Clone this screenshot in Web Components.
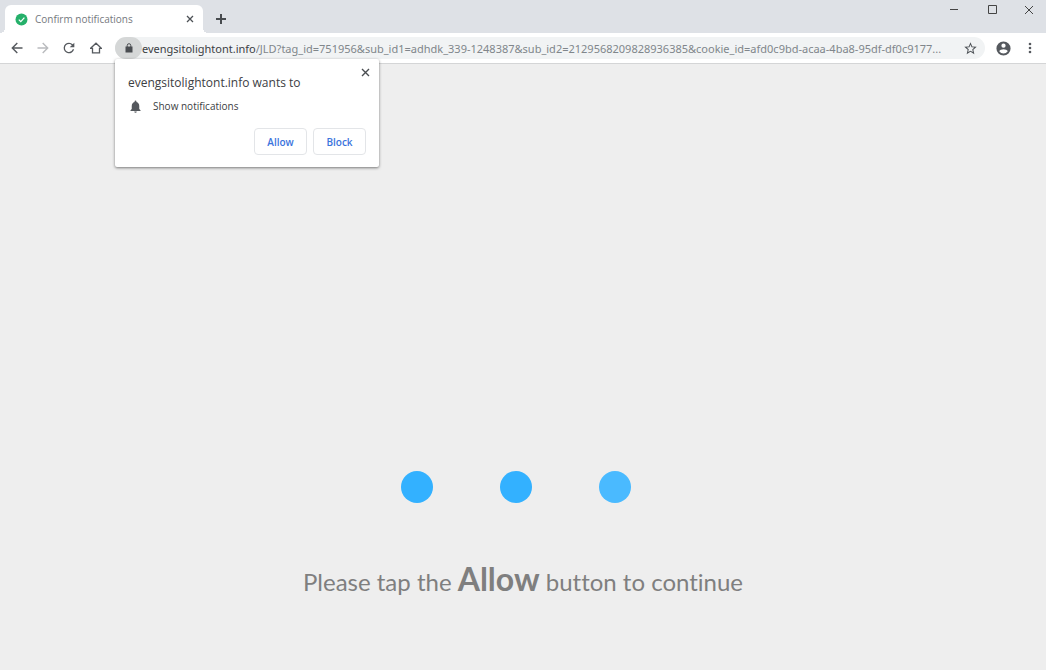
<!DOCTYPE html>
<html lang="en">
<head>
<meta charset="utf-8">
<title>Confirm notifications</title>
<style>
html, body { height: 100%; margin: 0; }
body { font-family: "Open Sans", "Noto Sans", sans-serif; background: #eee; }
</style>
</head>
<body>
<browser-window>
  <tab-strip slot="tabs"><browser-tab>Confirm notifications</browser-tab></tab-strip>
  <tool-bar slot="toolbar">
    <address-bar host="evengsitolightont.info" path="/JLD?tag_id=751956&amp;sub_id1=adhdk_339-1248387&amp;sub_id2=2129568209828936385&amp;cookie_id=afd0c9bd-acaa-4ba8-95df-df0c9177...">
      <permission-prompt>
        <span slot="title">evengsitolightont.info wants to</span>
        <span slot="permission">Show notifications</span>
      </permission-prompt>
    </address-bar>
  </tool-bar>
  <loading-page>Please tap the <strong>Allow</strong> button to continue</loading-page>
</browser-window>

<script>
const define = (name, html, setup) => customElements.define(name, class extends HTMLElement {
  constructor() {
    super();
    const t = document.createElement('template');
    t.innerHTML = `<style>
      *, :host { box-sizing: border-box; }
      button { font: inherit; color: inherit; background: none; border: 0; padding: 0; margin: 0; }
      svg { display: block; }
    </style>` + html;
    this.attachShadow({ mode: 'open' }).append(t.content.cloneNode(true));
  }
  connectedCallback() { if (setup) setup(this, this.shadowRoot); }
});

define('browser-window', `
  <style>
    :host { display: flex; flex-direction: column; min-height: 100%; }
    ::slotted(loading-page) { flex: 1; }
  </style>
  <slot name="tabs"></slot><slot name="toolbar"></slot><slot></slot>`);

define('tab-strip', `
  <style>
    :host { display: flex; height: 33px; padding: 5px 0 0 5px; background: #dee1e6; color: #484b4f; }
    .new { width: 36px; height: 28px; display: grid; place-items: center; }
    .controls { margin: -5px 0 0 auto; display: flex; height: 20px; }
    .controls button { width: 38px; display: grid; place-items: center; }
    .controls button:last-child { width: 34px; }
  </style>
  <slot></slot>
  <button class="new" aria-label="New tab"><svg width="12" height="12" viewBox="0 0 12 12" stroke="currentColor" stroke-width="2"><path d="M6 1v10M1 6h10"/></svg></button>
  <div class="controls">
    <button aria-label="Minimize"><svg width="10" height="10" stroke="#444" fill="none"><path d="M0 4.500h8"/></svg></button>
    <button aria-label="Maximize"><svg width="10" height="10" stroke="#444" fill="none"><path d="M.5.5h8v8h-8z"/></svg></button>
    <button aria-label="Close window"><svg width="10" height="10" stroke="#444" fill="none"><path d="M1 1l8 8M9 1L1 9"/></svg></button>
  </div>`);

define('browser-tab', `
  <style>
    :host { position: relative; display: flex; align-items: center; width: 198px; height: 28px; padding: 0 7px 0 10px; gap: 7px; background: #fff; border-radius: 6px 6px 0 0; font-size: 10px; color: #75797e; }
    :host::before, :host::after { content: ""; position: absolute; bottom: 0; width: 5px; height: 5px; }
    :host::before { right: 100%; background: radial-gradient(circle at 0 0, transparent 5px, #fff 5px); }
    :host::after { left: 100%; background: radial-gradient(circle at 100% 0, transparent 5px, #fff 5px); }
    span { flex: 1; white-space: nowrap; }
    button { display: grid; place-items: center; width: 12px; height: 12px; color: #4d5156; }
  </style>
  <svg width="13" height="13" viewBox="0 0 13 13"><circle cx="6.500" cy="6.500" r="6" fill="#25b06a"/><path d="M3.800 6.700l2 2 3.600-4" fill="none" stroke="#fff" stroke-width="1.200"/></svg>
  <span><slot></slot></span>
  <button aria-label="Close tab"><svg width="8" height="8" stroke="currentColor" stroke-width="1.300"><path d="M1 1l6 6M7 1L1 7"/></svg></button>`);

define('tool-bar', `
  <style>
    :host { display: flex; align-items: center; height: 31px; padding: 0 5px 0 6px; background: #fff; border-bottom: 1px solid #d4d5d6; color: #55595e; }
    button { width: 22px; height: 22px; margin-right: 4px; display: grid; place-items: center; flex: none; }
    button:disabled { color: #b9bbbe; }
    .home { margin: 0 8px 0 1px; }
    slot { display: flex; flex: 1; min-width: 0; }
    ::slotted(*) { flex: 1; }
    .user { margin: 0 5px 0 7px; }
    .menu { margin: 0; }
  </style>
  <button aria-label="Back"><svg width="12" height="12" viewBox="0 0 12 12" fill="none" stroke="currentColor" stroke-width="1.400"><path d="M11.500 6H1.500M6.300 1L1.300 6l5 5"/></svg></button>
  <button aria-label="Forward" disabled><svg width="12" height="12" viewBox="0 0 12 12" fill="none" stroke="currentColor" stroke-width="1.400"><path d="M.5 6h10M5.700 1l5 5-5 5"/></svg></button>
  <button aria-label="Reload"><svg width="16" height="16" viewBox="0 0 24 24" fill="currentColor"><path d="M17.650 6.350A7.960 7.960 0 0 0 12 4a8 8 0 1 0 7.730 10h-2.080A6 6 0 1 1 12 6c1.660 0 3.140.69 4.220 1.780L13 11h7V4z"/></svg></button>
  <button class="home" aria-label="Home"><svg width="12" height="12" viewBox="0 0 12 12" fill="none" stroke="currentColor" stroke-width="1.300"><path d="M.6 6.300L6 1.200l5.400 5.100H9.500v4.600h-7V6.300z"/></svg></button>
  <slot></slot>
  <button class="user" aria-label="Profile"><svg width="17" height="17" viewBox="0 0 24 24" fill="currentColor"><path d="M12 2a10 10 0 1 0 0 20 10 10 0 0 0 0-20zm0 3a3 3 0 1 1 0 6 3 3 0 0 1 0-6zm0 14.200a7.200 7.200 0 0 1-6-3.220c.03-1.990 4-3.080 6-3.080s5.970 1.090 6 3.080a7.200 7.200 0 0 1-6 3.220z"/></svg></button>
  <button class="menu" aria-label="Menu"><svg width="4" height="12" viewBox="0 0 4 12" fill="currentColor"><circle cx="2" cy="2" r="1.300"/><circle cx="2" cy="6" r="1.300"/><circle cx="2" cy="10" r="1.300"/></svg></button>`);

define('address-bar', `
  <style>
    :host { position: relative; display: flex; align-items: center; min-width: 0; height: 22px; padding-right: 4px; border-radius: 11px; background: #f1f3f4; font: 11px "Noto Sans", "Open Sans", sans-serif; color: #3c4043; }
    .lock { width: 27px; height: 22px; border-radius: 11px; background: #d5d7d7; display: grid; place-items: center; flex: none; }
    input { flex: 1; min-width: 0; border: 0; padding: 0; margin: 0; background: none; font: inherit; color: #80868b; text-overflow: ellipsis; }
    .star { width: 22px; height: 22px; display: grid; place-items: center; color: #4d5156; }
    ::slotted(permission-prompt) { position: absolute; top: 100%; left: 0; z-index: 1; }
  </style>
  <button class="lock" aria-label="Site information"><svg width="8" height="10" viewBox="0 0 8 10"><path d="M.5 3.500h7v6h-7z" fill="#4a4d51"/><path d="M2.200 4V2.500a1.800 1.800 0 0 1 3.600 0V4" fill="none" stroke="#4a4d51"/></svg></button>
  <label for="path"></label><input id="path" type="text" spellcheck="false">
  <button class="star" aria-label="Bookmark"><svg width="15" height="15" viewBox="0 0 24 24" fill="currentColor"><path d="M22 9.240l-7.190-.62L12 2 9.190 8.630 2 9.240l5.460 4.730L5.820 21 12 17.270 18.180 21l-1.630-7.030zM12 15.400l-3.760 2.270 1-4.280-3.320-2.880 4.380-.38L12 6.100l1.710 4.040 4.380.38-3.320 2.880 1 4.280z"/></svg></button>
  <slot></slot>`, (el, root) => {
    root.querySelector('label').textContent = el.getAttribute('host');
    root.querySelector('input').value = el.getAttribute('path');
  });

define('permission-prompt', `
  <style>
    :host { display: block; width: 264px; padding: 15px 13px 12px; background: #fff; border-radius: 2px; box-shadow: 0 1px 3px rgba(0,0,0,.5); font-family: "Open Sans", "Noto Sans", sans-serif; color: #3c4043; }
    .close { position: absolute; top: 7px; right: 7px; width: 13px; height: 13px; display: grid; place-items: center; }
    .title { font-size: 12px; line-height: 17px; white-space: nowrap; }
    .row { display: flex; align-items: center; gap: 10px; margin: 7px 0 14px; font-size: 10px; line-height: 16px; }
    .actions { display: flex; justify-content: flex-end; gap: 6px; }
    .actions button { width: 53px; height: 27px; border: 1px solid #e3e5e8; border-radius: 4px; color: #3b74dd; font-size: 10px; font-weight: 600; }
  </style>
  <button class="close" aria-label="Close"><svg width="9" height="9" stroke="#4a4d51" stroke-width="1.400"><path d="M1 1l7 7M8 1L1 8"/></svg></button>
  <div class="title"><slot name="title"></slot></div>
  <div class="row"><svg width="15" height="15" viewBox="0 0 24 24" fill="#54585d"><path d="M12 22a2 2 0 0 0 2-2h-4a2 2 0 0 0 2 2zm6-6v-5c0-3.070-1.640-5.640-4.500-6.320V4a1.500 1.500 0 0 0-3 0v.68C7.630 5.360 6 7.920 6 11v5l-2 2v1h16v-1z"/></svg><slot name="permission"></slot></div>
  <div class="actions"><button>Allow</button><button>Block</button></div>`);

define('loading-page', `
  <style>
    :host { display: flex; flex-direction: column; align-items: center; justify-content: flex-end; padding-bottom: 64px; background: #eee; color: #7f7f7f; font: 24px/48px Lato, "Noto Sans", sans-serif; font-variant-ligatures: none; }
    .dots { display: flex; gap: 67px; margin: 0 14px 52px 0; }
    i { width: 32px; height: 32px; border-radius: 50%; background: #33b1ff; }
    i:last-child { background: #4abaff; }
    p { margin: 0; text-align: center; }
    ::slotted(strong) { font-size: 32px; }
  </style>
  <div class="dots" role="status" aria-label="Loading"><i></i><i></i><i></i></div>
  <p><slot></slot></p>`);
</script>
</body>
</html>
